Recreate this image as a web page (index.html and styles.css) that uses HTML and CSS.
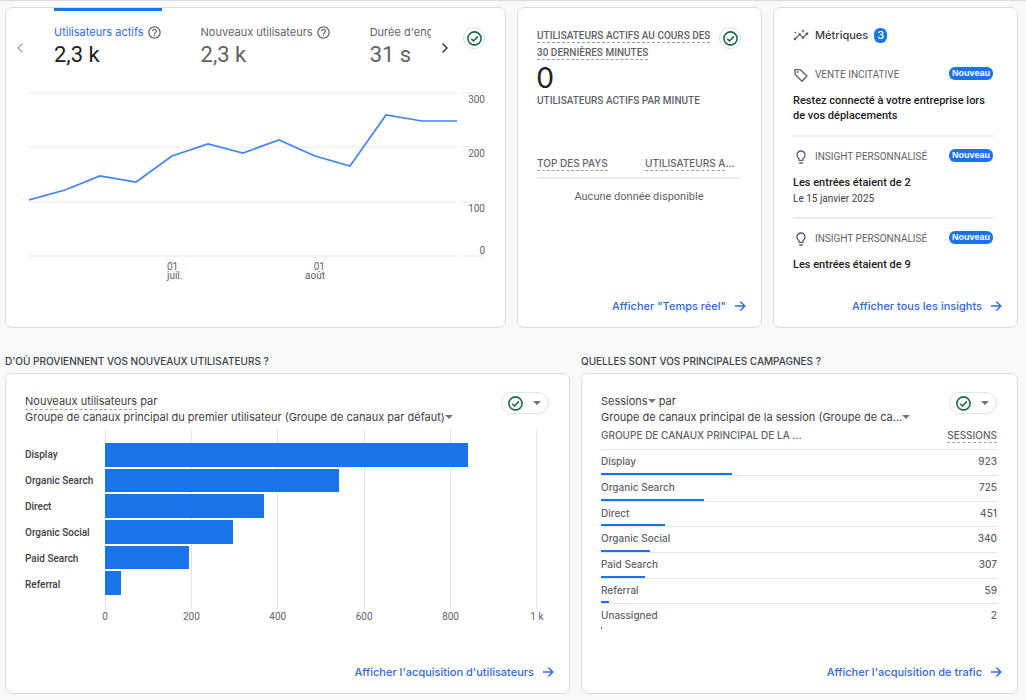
FILE: index.html
```html
<!DOCTYPE html>
<html lang="fr">
<head>
<meta charset="utf-8">
<title>Accueil</title>
<link rel="stylesheet" href="styles.css">
</head>
<body>
<svg class="defs" width="0" height="0" aria-hidden="true">
  <symbol id="check" viewBox="0 0 16 16"><circle cx="8" cy="8" r="6.2" fill="none" stroke="#1d6b3f" stroke-width="1.5"/><path d="M5 8.2l2.1 2.1L11.2 6" fill="none" stroke="#1d6b3f" stroke-width="1.5"/></symbol>
  <symbol id="help" viewBox="0 0 24 24"><path fill="#5f6368" d="M11 18h2v-2h-2v2zm1-16C6.480 2 2 6.480 2 12s4.480 10 10 10 10-4.480 10-10S17.520 2 12 2zm0 18c-4.410 0-8-3.590-8-8s3.590-8 8-8 8 3.590 8 8-3.590 8-8 8zm0-14c-2.210 0-4 1.790-4 4h2c0-1.100.9-2 2-2s2 .9 2 2c0 2-3 1.750-3 5h2c0-2.250 3-2.500 3-5 0-2.210-1.790-4-4-4z"/></symbol>
  <symbol id="arrow" viewBox="0 0 12 12"><path d="M1 6h9.500M6.300 1.500L10.800 6l-4.500 4.500" fill="none" stroke="#3367e0" stroke-width="1.400"/></symbol>
  <symbol id="bulb" viewBox="0 0 24 24"><path fill="#5f6368" d="M9 21c0 .55.45 1 1 1h4c.55 0 1-.45 1-1v-1H9v1zm3-19C8.140 2 5 5.140 5 9c0 2.380 1.190 4.470 3 5.740V17c0 .55.45 1 1 1h6c.55 0 1-.45 1-1v-2.260c1.810-1.270 3-3.360 3-5.740 0-3.860-3.140-7-7-7zm2.850 11.100l-.85.6V16h-4v-2.300l-.85-.6C7.800 12.160 7 10.630 7 9c0-2.760 2.240-5 5-5s5 2.240 5 5c0 1.630-.8 3.160-2.150 4.100z"/></symbol>
</svg>
<main class="page">
  <div class="row row-top">
    <section class="card overview">
      <div class="overview-head">
        <button class="nav nav-prev" aria-label="Précédent"><svg width="8" height="12" viewBox="0 0 8 12"><path d="M6.500 1.500L2 6l4.500 4.500" fill="none" stroke="#9aa0a6" stroke-width="1.200"/></svg></button>
        <div class="tabs">
          <button class="tab active"><span class="tab-label">Utilisateurs actifs <svg width="15" height="15"><use href="#help"/></svg></span><span class="tab-value">2,3 k</span></button>
          <button class="tab"><span class="tab-label">Nouveaux utilisateurs <svg width="15" height="15"><use href="#help"/></svg></span><span class="tab-value">2,3 k</span></button>
          <button class="tab"><span class="tab-label">Durée d'eng</span><span class="tab-value">31 s</span></button>
        </div>
        <button class="nav nav-next" aria-label="Suivant"><svg width="8" height="12" viewBox="0 0 8 12"><path d="M1.500 1.500L6 6l-4.500 4.500" fill="none" stroke="#3c4043" stroke-width="1.500"/></svg></button>
        <button class="status" aria-label="Qualité des données"><svg width="17" height="17"><use href="#check"/></svg></button>
      </div>
      <svg class="line-chart" viewBox="0 0 456 190" role="img" aria-label="Utilisateurs actifs">
        <g stroke="#f1f1f2" stroke-width="1.500">
          <path d="M0 1H428M432 1H456M0 55H428M432 55H456M0 110H428M432 110H456M0 164H428M432 164H456"/>
          <path d="M138 164V169M296 164V169"/>
        </g>
        <path class="line" d="M0 108L36 98L71 84L107 90L143 64L179 52L214 61L250 48L286 64L321 74L357 23L393 29H428"/>
        <g class="axis" text-anchor="end"><text x="456" y="11">300</text><text x="456" y="65">200</text><text x="456" y="120">100</text><text x="456" y="162">0</text><text x="296" y="178">01</text><text x="296" y="187">août</text></g>
        <g class="axis"><text x="138" y="178">01</text><text x="138" y="187">juil.</text></g>
      </svg>
    </section>

    <section class="card realtime">
      <div class="realtime-head">
        <h2 class="caption"><span class="dashed">Utilisateurs actifs au cours des 30 dernières minutes</span></h2>
        <button class="status" aria-label="Qualité des données"><svg width="17" height="17"><use href="#check"/></svg></button>
      </div>
      <div class="big">0</div>
      <p class="caption">Utilisateurs actifs par minute</p>
      <table class="countries">
        <thead><tr><th><span class="dashed">Top des pays</span></th><th><span class="dashed">Utilisateurs a</span>…</th></tr></thead>
        <tbody><tr><td colspan="2">Aucune donnée disponible</td></tr></tbody>
      </table>
      <a class="more" href="#">Afficher "Temps réel" <svg width="12" height="12"><use href="#arrow"/></svg></a>
    </section>

    <section class="card insights">
      <h2 class="insights-title"><svg width="16" height="16" viewBox="0 0 24 24"><path fill="#5f6368" d="M21 8c-1.450 0-2.260 1.440-1.930 2.510l-3.550 3.560c-.3-.09-.74-.09-1.040 0l-2.550-2.550C12.270 10.450 11.460 9 10 9c-1.450 0-2.270 1.440-1.930 2.520l-4.560 4.550C2.440 15.740 1 16.550 1 18c0 1.100.9 2 2 2 1.450 0 2.260-1.440 1.930-2.510l4.550-4.560c.3.090.74.090 1.040 0l2.550 2.550C12.730 16.550 13.540 18 15 18c1.450 0 2.270-1.440 1.930-2.520l3.560-3.550C21.560 12.260 23 11.450 23 10c0-1.100-.9-2-2-2z"/><path fill="#5f6368" d="M15 9l.94-2.070L18 6l-2.060-.93L15 3l-.92 2.070L12 6l2.080.93zM3.500 11L4 9l2-.5L4 8l-.5-2L3 8l-2 .5L3 9z"/></svg><span>Métriques</span><span class="count">3</span></h2>
      <article class="insight">
        <div class="insight-head"><svg width="16" height="16" viewBox="0 0 16 16"><path d="M2 2.600v4.700l7 7 5-5.200-7-6.500z" fill="none" stroke="#5f6368" stroke-width="1.400" stroke-linejoin="round"/><circle cx="4.700" cy="5.100" r="1" fill="#5f6368"/></svg><span>VENTE INCITATIVE</span><span class="new">Nouveau</span></div>
        <p>Restez connecté à votre entreprise lors de vos déplacements</p>
      </article>
      <article class="insight">
        <div class="insight-head"><svg width="16" height="16"><use href="#bulb"/></svg><span>INSIGHT PERSONNALISÉ</span><span class="new">Nouveau</span></div>
        <p>Les entrées étaient de 2</p><small>Le 15 janvier 2025</small>
      </article>
      <article class="insight">
        <div class="insight-head"><svg width="16" height="16"><use href="#bulb"/></svg><span>INSIGHT PERSONNALISÉ</span><span class="new">Nouveau</span></div>
        <p>Les entrées étaient de 9</p>
      </article>
      <a class="more" href="#">Afficher tous les insights <svg width="12" height="12"><use href="#arrow"/></svg></a>
    </section>
  </div>

  <div class="row row-bottom">
    <div class="column">
      <h2 class="caption question">D'où proviennent vos nouveaux utilisateurs ?</h2>
      <section class="card report">
        <div class="report-head">
          <h3><span class="dashed">Nouveaux utilisateurs</span> par<br><button class="pick">Groupe de canaux principal du premier utilisateur (Groupe de canaux par défaut)<i class="caret"></i></button></h3>
          <button class="status wide" aria-label="Qualité des données"><svg width="17" height="17"><use href="#check"/></svg><i class="caret"></i></button>
        </div>
        <div class="bar-chart">
          <div class="names"><span>Display</span><span>Organic Search</span><span>Direct</span><span>Organic Social</span><span>Paid Search</span><span>Referral</span></div>
          <div class="plot">
            <div class="bars">
              <div class="bar" style="width:84.200%"></div>
              <div class="bar" style="width:54.300%"></div>
              <div class="bar" style="width:37%"></div>
              <div class="bar" style="width:29.600%"></div>
              <div class="bar" style="width:19.400%"></div>
              <div class="bar" style="width:3.700%"></div>
            </div>
            <div class="ticks"><span>0</span><span>200</span><span>400</span><span>600</span><span>800</span><span>1 k</span></div>
          </div>
        </div>
        <a class="more" href="#">Afficher l'acquisition d'utilisateurs <svg width="12" height="12"><use href="#arrow"/></svg></a>
      </section>
    </div>

    <div class="column">
      <h2 class="caption question">Quelles sont vos principales campagnes ?</h2>
      <section class="card report">
        <div class="report-head">
          <h3><button class="pick">Sessions<i class="caret"></i></button> par<br><button class="pick">Groupe de canaux principal de la session (Groupe de ca...<i class="caret"></i></button></h3>
          <button class="status wide" aria-label="Qualité des données"><svg width="17" height="17"><use href="#check"/></svg><i class="caret"></i></button>
        </div>
        <table class="sessions">
          <thead><tr><th>Groupe de canaux principal de la …</th><th><span class="dashed">Sessions</span></th></tr></thead>
          <tbody>
            <tr><td>Display<div class="meter" style="width:131px"></div></td><td>923</td></tr>
            <tr><td>Organic Search<div class="meter" style="width:103px"></div></td><td>725</td></tr>
            <tr><td>Direct<div class="meter" style="width:64px"></div></td><td>451</td></tr>
            <tr><td>Organic Social<div class="meter" style="width:49px"></div></td><td>340</td></tr>
            <tr><td>Paid Search<div class="meter" style="width:44px"></div></td><td>307</td></tr>
            <tr><td>Referral<div class="meter" style="width:8px"></div></td><td>59</td></tr>
            <tr><td>Unassigned<div class="meter" style="width:1px"></div></td><td>2</td></tr>
          </tbody>
        </table>
        <a class="more" href="#">Afficher l'acquisition de trafic <svg width="12" height="12"><use href="#arrow"/></svg></a>
      </section>
    </div>
  </div>
</main>
</body>
</html>
```
FILE: styles.css
```css
* { box-sizing: border-box; }
body { margin: 0; background: #f8f9fb; color: #3c4043; font: 11px/16px Roboto, sans-serif; }
h2, h3, p { margin: 0; font-size: inherit; font-weight: 400; }
button { border: 0; padding: 0; background: none; font: inherit; color: inherit; text-align: left; }
svg { display: block; flex: none; }
.defs { position: absolute; }

.page { border-top: 1px solid #dadce0; padding: 6px 8px 6px 5px; }
.row { display: grid; gap: 11px; }
.row-top { grid-template-columns: 501fr 245fr 245fr; }
.row-bottom { grid-template-columns: 565fr 437fr; margin-top: 24px; }
.row > * { min-width: 0; }
.card { display: flex; flex-direction: column; min-height: 321px; border: 1px solid #dadce0; border-radius: 7px; background: #fff; }

.caption { font: 500 10px/17px Inter, sans-serif; text-transform: uppercase; color: #5f6368; }
.question { line-height: 18px; margin-bottom: 3px; color: #3c4043; }
.dashed { padding-bottom: 1px; border-bottom: 1px dashed #9aa0a6; }
.more { display: flex; align-items: center; justify-content: flex-end; gap: 8px; margin: auto 15px 13px auto; color: #3367e0; font: 500 11px/16px Inter, sans-serif; text-decoration: none; }
.status { display: flex; flex: none; align-items: center; justify-content: center; width: 22px; height: 22px; border: 1px solid #e0e2e5; border-radius: 11px; }
.wide { justify-content: flex-start; width: 48px; gap: 9px; padding-left: 5px; }
.caret { display: inline-block; border: 4px solid transparent; border-top-color: #70757a; border-bottom: 0; vertical-align: 2px; }

.overview-head { display: flex; height: 84px; padding-right: 20px; }
.nav { align-self: flex-start; flex: none; margin-top: 34px; }
.nav-prev { margin-left: 10px; }
.nav-next { margin-left: 10px; }
.overview-head .status { margin: 19px 0 0 14px; }
.tabs { display: flex; flex: 1; gap: 39px; min-width: 0; margin-left: 30px; overflow: hidden; }
.tab { display: flex; flex: none; flex-direction: column; align-self: flex-start; border-top: 3px solid transparent; padding-top: 13px; color: #5f6368; }
.active { border-color: #1a73e8; color: #202124; }
.tab-label { display: flex; align-items: center; gap: 3px; font: 11px/16px Inter, sans-serif; white-space: nowrap; }
.active .tab-label { color: #3367e0; }
.tab-value { font-size: 22px; line-height: 30px; }
.line-chart { width: auto; margin: 0 20px 0 23px; }
.line { fill: none; stroke: #4285f4; stroke-width: 1.700px; }
.axis { fill: #5f6368; font-size: 10px; }

.realtime { padding-left: 19px; }
.realtime .caption { font-family: Roboto, sans-serif; }
.realtime-head { display: flex; justify-content: space-between; gap: 2px; padding: 19px 20px 0 0; }
.big { padding-top: 2px; color: #202124; font: 28px/29px Lato, sans-serif; }
.countries { width: calc(100% - 20px); margin-top: 46px; border-collapse: collapse; }
.countries th { padding: 0 0 5px; border-bottom: 2px solid #ececee; color: #5f6368; font: 500 10px/17px Inter, sans-serif; text-align: left; text-transform: uppercase; white-space: nowrap; }
.countries th:first-child { width: 53%; }
.countries td { padding-top: 10px; color: #5f6368; text-align: center; }

.insights-title { display: flex; align-items: center; gap: 6px; padding: 19px 19px 0; font: 500 11px/16px Inter, sans-serif; }
.count { padding: 0 3px; border-radius: 6px; background: #1a73e8; color: #fff; line-height: 15px; }
.insight { margin: 0 24px 0 19px; padding: 12px 0 10px; border-bottom: 2px solid #ececee; }
.insights-title + .insight { padding: 24px 0 12px; }
.insight:last-of-type { border: 0; }
.insight-head { display: flex; align-items: center; gap: 6px; color: #5f6368; font-size: 10px; }
.new { margin: 0 0 3px auto; padding: 0 3px; border-radius: 6px; background: #1a73e8; color: #fff; font: 700 9px/13px "Liberation Sans", sans-serif; }
.insight p { margin-top: 10px; color: #202124; font-weight: 500; line-height: 15px; }
.insight small { display: block; font-size: 10px; line-height: 17px; }

.report { padding-left: 19px; }
.report-head { display: flex; justify-content: space-between; padding: 18px 20px 0 0; font: 11px/16px Inter, sans-serif; }
.report-head h3 { padding-top: 1px; }
.pick { white-space: nowrap; }
.bar-chart { display: grid; grid-template-columns: 80px 1fr; margin: 4px 32px 0 0; color: #3c4043; font: 500 10px/24px Roboto, sans-serif; }
.names { display: grid; grid-auto-rows: 1fr; gap: 2px; height: 152px; margin-top: 14px; }
.bars { display: grid; grid-auto-rows: 1fr; gap: 2px; height: 180px; padding: 14px 0; background: repeating-linear-gradient(to right, #e4e5e7 0 1px, transparent 1px 20%); border-right: 1px solid #e4e5e7; }
.bar { background: #1a73e8; }
.ticks { display: flex; justify-content: space-between; margin: 2px -20px 0; line-height: 12px; font-weight: 400; color: #5f6368; }
.ticks span { width: 40px; text-align: center; }

.sessions { width: calc(100% - 20px); border-collapse: collapse; color: #5f6368; font: 500 10px/17px Inter, sans-serif; }
.sessions th { padding: 2px 0 5px; font-weight: 500; text-align: left; text-transform: uppercase; }
.sessions th:last-child, .sessions td:last-child { text-align: right; }
.sessions td { padding: 0; border-top: 1px solid #e4e5e7; vertical-align: top; line-height: 23px; }
.sessions tr:nth-child(3n) td { line-height: 22px; }
.meter { height: 2px; background: #1a73e8; }
```
